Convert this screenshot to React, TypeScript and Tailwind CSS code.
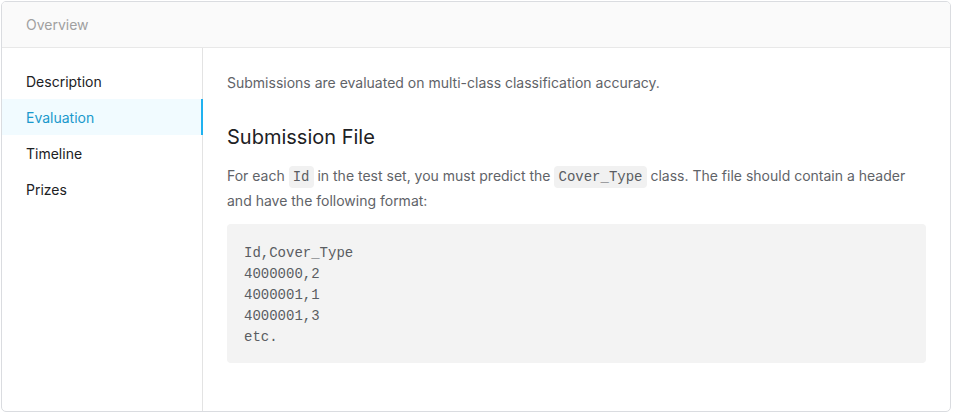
export default function App() {
  const items = ["Description", "Evaluation", "Timeline", "Prizes"];
  const mono = { fontFamily: '"Liberation Mono", "DejaVu Sans Mono", monospace' };
  return (
    <div className="w-[953px] h-[415px] bg-white p-[1px]" style={{ fontFamily: 'Inter, "Noto Sans", sans-serif' }}>
      <div className="w-[950px] h-[411px] border border-[#dadce0] rounded-[5px] overflow-hidden flex flex-col">
        <div className="h-[46px] shrink-0 bg-[#fafafa] border-b border-[#e8e8e8] flex items-center px-[24px] text-[14px] text-[#a0a0a0]">
          Overview
        </div>
        <div className="flex flex-1">
          <div className="w-[201px] shrink-0 border-r border-[#e3e3e3] pt-[15px] flex flex-col">
            {items.map((it) => (
              <div
                key={it}
                className={
                  it === "Evaluation"
                    ? "h-[36px] flex items-center pl-[24px] text-[14px] text-[#1a99cc] bg-[#f1fbff] border-r-2 border-[#20b2f0] -mr-[1px]"
                    : "h-[36px] flex items-center pl-[24px] text-[14px] text-[#202124]"
                }
              >
                {it}
              </div>
            ))}
          </div>
          <div className="flex-1 pl-[24px] pr-[24px] pt-[23px] text-[14px] text-[#5f6368]">
            <p className="leading-[24px] text-[14px]">Submissions are evaluated on multi-class classification accuracy.</p>
            <h2 className="text-[20px] text-[#202124] mt-[27px] leading-[30px]">Submission File</h2>
            <p className="mt-[12px] leading-[23px] text-[14px]">
              For each{" "}
              <code className="bg-[#f1f1f1] rounded-[4px] px-[4px] py-[3px] text-[14px] text-[#5a5d62]" style={mono}>Id</code>{" "}
              in the test set, you must predict the{" "}
              <code className="bg-[#f1f1f1] rounded-[4px] px-[4px] py-[3px] text-[14px] text-[#5a5d62]" style={mono}>Cover_Type</code>{" "}
              class. The file should contain a header and have the following format:
            </p>
            <pre
              className="mt-[12px] bg-[#f3f3f3] rounded-[4px] h-[139px] px-[17px] pt-[19px] text-[14px] leading-[21px] text-[#5a5d62]"
              style={mono}
            >
{`Id,Cover_Type
4000000,2
4000001,1
4000001,3
etc.`}
            </pre>
          </div>
        </div>
      </div>
    </div>
  );
}
